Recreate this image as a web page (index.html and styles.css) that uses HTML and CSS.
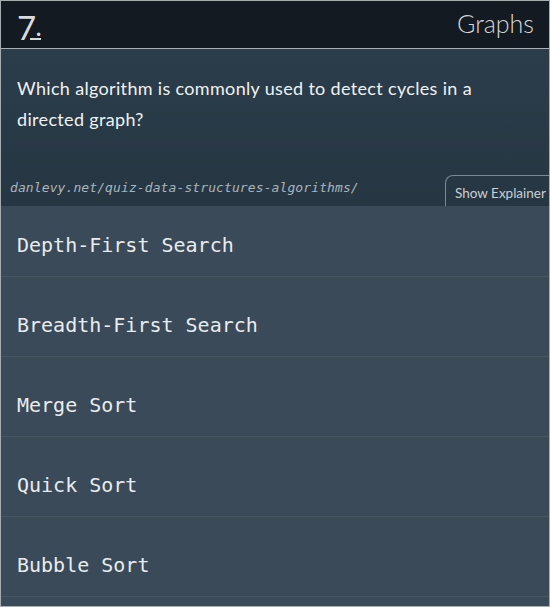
FILE: index.html
```html
<!DOCTYPE html>
<html lang="en">
<head>
<meta charset="utf-8">
<title>Quiz - Graphs</title>
<link rel="stylesheet" href="styles.css">
</head>
<body>
<div class="frame">
  <header class="topbar">
    <div class="logo"><span class="seven">7</span><span class="dot">.</span></div>
    <div class="category">Graphs</div>
  </header>
  <section class="question">
    <p class="qtext">Which algorithm is commonly used to detect cycles in a directed graph?</p>
    <div class="meta">
      <span class="url">danlevy.net/quiz-data-structures-algorithms/</span>
      <button class="explainer">Show Explainer</button>
    </div>
  </section>
  <ul class="options">
    <li class="opt">Depth-First Search</li>
    <li class="opt">Breadth-First Search</li>
    <li class="opt">Merge Sort</li>
    <li class="opt">Quick Sort</li>
    <li class="opt">Bubble Sort</li>
  </ul>
</div>
</body>
</html>
```

FILE: styles.css
```css
html, body {
  margin: 0;
  padding: 0;
  background: #ffffff;
}
.frame {
  box-sizing: border-box;
  width: 550px;
  height: 607px;
  border: 1px solid #a6adb1;
  overflow: hidden;
  background: #3a4a58;
  font-family: "Lato", "Open Sans", sans-serif;
}
.topbar {
  height: 47px;
  background: #131a21;
  border-bottom: 1px solid #a9b0b5;
  display: flex;
  align-items: center;
  justify-content: space-between;
  padding: 0 15px 0 16px;
}
.logo {
  color: #d8dcdf;
  font-size: 33px;
  line-height: 1;
  display: flex;
  align-items: flex-end;
  padding-top: 6px;
}
.seven {
  font-weight: 400;
}
.dot {
  font-size: 22px;
  font-weight: 700;
  border-bottom: 2px solid #d8dcdf;
  line-height: 20px;
  width: 11px;
  margin-left: -6px;
  text-align: right;
  margin-bottom: 4px;
}
.category {
  color: #d3d7da;
  font-size: 25px;
  font-weight: 300;
  padding-bottom: 3px;
}
.question {
  height: 157px;
  box-sizing: border-box;
  background: linear-gradient(#2b3d4b, #263643);
  padding-top: 24px;
  display: flex;
  flex-direction: column;
}
.qtext {
  margin: 0;
  padding: 0 40px 0 16px;
  color: #f0f2f3;
  font-size: 18px;
  line-height: 31px;
  letter-spacing: 0.33px;
}
.meta {
  margin-top: auto;
  display: flex;
  align-items: flex-end;
  justify-content: space-between;
}
.url {
  font-family: "DejaVu Sans Mono", monospace;
  font-style: italic;
  font-size: 13px;
  letter-spacing: 0.1px;
  color: #a9b5bd;
  padding: 0 0 11px 9px;
}
.explainer {
  box-sizing: border-box;
  width: 112px;
  height: 31px;
  margin-right: -8px;
  flex-shrink: 0;
  background: transparent;
  border: 1px solid #7b8994;
  border-bottom: none;
  border-radius: 8px 8px 0 0;
  color: #c9d0d5;
  font-family: "Lato", "Open Sans", sans-serif;
  font-size: 13.5px;
  text-align: left;
  padding: 3px 0 0 9px;
}
.options {
  list-style: none;
  margin: 0;
  padding: 0;
}
.opt {
  box-sizing: border-box;
  height: 80px;
  border-bottom: 1px solid #475764;
  padding: 36px 0 0 16px;
  font-family: "DejaVu Sans Mono", monospace;
  font-size: 20px;
  line-height: 24px;
  color: #e8ecef;
}
.opt:first-child {
  height: 71px;
  padding-top: 27px;
}
```
